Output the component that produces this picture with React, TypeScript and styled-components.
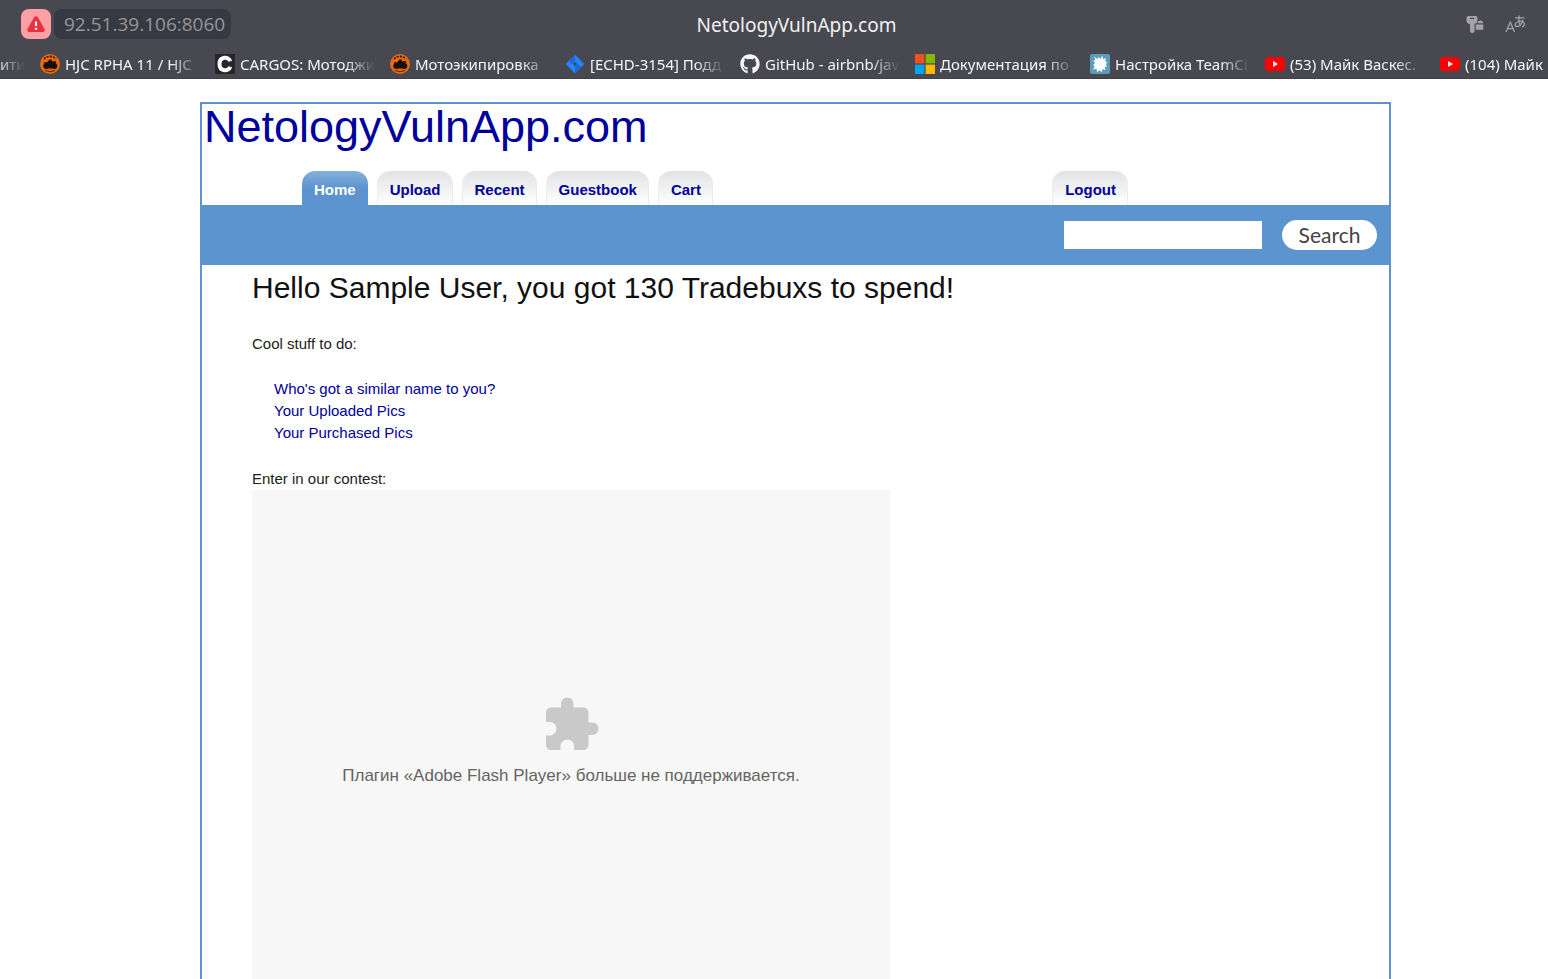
import React from "react";
import styled, { createGlobalStyle, css } from "styled-components";
import { FaGithub } from "react-icons/fa";

const GlobalStyle = createGlobalStyle`
  * { box-sizing: border-box; }
  body { margin: 0; background: #fff; }
  a { text-decoration: none; }
`;

const uiFont = `"Noto Sans", "Open Sans", sans-serif`;
const pageFont = `Arial, "Liberation Sans", sans-serif`;
const blue = "#5c94cf";
const navy = "#00009c";

const Window = styled.div`
  display: flex;
  flex-direction: column;
  height: 100vh;
  overflow: hidden;
`;

const Chrome = styled.header`
  flex: none;
  background: #484850;
  font-family: ${uiFont};
  border-bottom: 1px solid #3f3f46;
`;

const AddressBar = styled.div`
  display: grid;
  grid-template-columns: 1fr auto 1fr;
  align-items: center;
  height: 50px;
  padding: 0 22px 2px 21px;
`;

const AddressGroup = styled.div`
  display: flex;
  align-items: center;
  gap: 3px;
`;

const WarningButton = styled.button`
  display: flex;
  align-items: center;
  justify-content: center;
  width: 30px;
  height: 30px;
  padding: 0;
  border: 0;
  border-radius: 8px;
  background: #ffa0a4;
`;

const Address = styled.button`
  height: 30px;
  padding: 0 6px 0 10px;
  border: 0;
  border-radius: 8px;
  background: #373942;
  color: #96969c;
  font: 19px/30px "Open Sans", sans-serif;
`;

const WindowTitle = styled.div`
  padding: 2px 0 0 46px;
  color: #f1f1f2;
  font-size: 19px;
  line-height: 30px;
`;

const Tools = styled.div`
  display: flex;
  justify-content: flex-end;
  gap: 21px;
`;

const ToolButton = styled.button`
  display: flex;
  padding: 0;
  border: 0;
  background: none;
  color: #a3a3a7;
`;

const Bookmarks = styled.nav`
  display: flex;
  gap: 15px;
  height: 28px;
  overflow: hidden;
`;

const Bookmark = styled.a<{ $cut?: boolean }>`
  flex: none;
  display: flex;
  align-items: center;
  gap: 5px;
  width: ${(p) => (p.$cut ? 25 : 160)}px;
  height: 28px;
  color: #f6f6f7;
  font-size: 15px;
  line-height: 28px;

  svg { flex: none; }
`;

const BookmarkLabel = styled.span`
  flex: 1;
  overflow: hidden;
  white-space: nowrap;
  mask-image: linear-gradient(to left, transparent, #000 30px);
`;

const Viewport = styled.main`
  flex: 1;
  min-height: 0;
  overflow: auto;
  scrollbar-width: none;
  padding: 23px 157px 0 200px;
  font-family: ${pageFont};
  font-size: 15px;
  line-height: 22px;
  color: #222;
`;

const Frame = styled.div`
  border: 2px solid ${blue};
`;

const SiteTitle = styled.h1`
  margin: 0;
  padding-left: 2px;
  font-size: 45px;
  font-weight: 400;
  line-height: 46px;

  a { color: ${navy}; }
`;

const Tabs = styled.nav`
  display: flex;
  gap: 9px;
  margin-top: 21px;
  padding: 0 261px 0 100px;
`;

const Tab = styled.a<{ $active?: boolean; $end?: boolean }>`
  height: 34px;
  padding: 0 12px 0 13px;
  border-radius: 13px 13px 0 0;
  font-weight: 700;
  line-height: 38px;
  color: ${navy};
  background: linear-gradient(#e0e3e4, #fff);
  box-shadow: inset 1px 0 #ededed, inset -1px 0 #ededed;
  ${(p) => p.$end && css`margin-left: auto;`}
  ${(p) =>
    p.$active &&
    css`
      padding-left: 12px;
      color: #fff;
      background: linear-gradient(#86b0dc, ${blue} 50%);
      box-shadow: none;
    `}
`;

const SearchBar = styled.form`
  display: flex;
  align-items: center;
  justify-content: flex-end;
  gap: 20px;
  height: 60px;
  padding-right: 12px;
  background: ${blue};
`;

const SearchInput = styled.input`
  width: 198px;
  height: 28px;
  padding: 0 4px;
  border: 0;
  background: #fff;
  font: 15px ${pageFont};
`;

const SearchButton = styled.button`
  width: 95px;
  height: 30px;
  padding: 0;
  border: 0;
  border-radius: 15px;
  background: #fff;
  color: #444;
  font: 21px/28px Lato, "Open Sans", sans-serif;
`;

const Content = styled.section`
  padding: 0 50px;
`;

const Greeting = styled.h2`
  margin: 0;
  color: #111;
  font-size: 30px;
  font-weight: 400;
  line-height: 45px;
`;

const Paragraph = styled.p`
  margin: 23px 0 0;
`;

const LinkList = styled.ul`
  margin: 23px 0 24px;
  padding: 0 0 0 22px;
  list-style: none;

  a { color: ${navy}; }
`;

const PluginBox = styled.div`
  display: flex;
  flex-direction: column;
  align-items: center;
  justify-content: center;
  gap: 10px;
  max-width: 638px;
  height: 502px;
  background: #f7f7f7;
  color: #646464;
  font-size: 17px;
`;

const Warning = () => (
  <svg width="18" height="17" viewBox="0 0 18 17">
    <path d="M7.3 1.1a2 2 0 0 1 3.4 0l6.7 11.7c.8 1.5 0 3.2-1.8 3.2H2.4C.6 16-.2 14.300.6 12.800z" fill="#e9303d" />
    <path d="M9 5.500v4.500" stroke="#fff" strokeWidth="2.200" />
    <circle cx="9" cy="12.700" r="1.300" fill="#fff" />
  </svg>
);

const Keys = () => (
  <svg width="18" height="18" viewBox="0 0 18 18" fill="currentColor">
    <path fillRule="evenodd" d="M2.500 1h7A2 2 0 0 1 11.500 3v2.600A3.400 3.400 0 0 1 8.500 9v7.500L7 18H5.500L4 16.500V9.200A4 4 0 0 1 .500 5.500V3a2 2 0 0 1 2-2zM4 2.700v1.300h4V2.700z" />
    <path d="M11.500 8.200c.3-3.700 5.500-3.700 5.700 0zM9.700 9.500h7.600v5.300H9.700z" />
  </svg>
);

const Translate = () => (
  <svg width="21" height="18" viewBox="0 0 21 18" fill="none" stroke="currentColor" strokeWidth="1.300">
    <path d="M1 17 5.300 7.200 9.500 17M2.500 13.700h5.700" />
    <path d="M10 2.800h9.500M14 .500c-.6 4-.2 7 1.200 10.500M17.800 4.800c-1.200 4.500-3.800 7-6.300 6.700-2.700-.6-1-4.800 3.500-5.300 4.500-.3 6.200 4.300 1.800 5.600" />
  </svg>
);

const Moto = () => (
  <svg width="20" height="20" viewBox="0 0 20 20">
    <circle cx="10" cy="10" r="10" fill="#e96a0c" />
    <path d="M4 4.800Q10 0 16 4.800" fill="none" stroke="#231506" strokeWidth="1.600" strokeDasharray="2 1.200" />
    <circle cx="6.300" cy="12" r="3" fill="#170e08" />
    <circle cx="14.300" cy="12" r="3" fill="#170e08" />
    <path d="m3.500 8 3.500.4 2.500-2.800 2.500.2-.5 1.800 4-.5.800 1.800-2 1.200.5 3-3 1.500H7.500L6 11z" fill="#170e08" />
    <path d="M5 16.500q5 2.400 10 0" stroke="#4a2509" fill="none" />
  </svg>
);

const Cargos = () => (
  <svg width="20" height="20" viewBox="0 0 20 20">
    <path fill="#26262a" d="M0 0h20v20H0z" />
    <path d="M15.200 7.300C13.700 2 4.500 2.300 4.500 10s9.200 8 10.700 2.700" fill="none" stroke="#fff" strokeWidth="4" />
  </svg>
);

const Jira = () => (
  <svg width="20" height="20" viewBox="0 0 20 20">
    <path d="m10 .500 9.300 9.500L10 19.500.700 10z" fill="#2684ff" />
    <path d="M10 .500v6.400L6.900 10 4.200 7.200zM10 19.500v-6.400l3.100-3.100 2.700 2.800z" fill="#1b68d8" />
    <path d="m10 7.700 2.300 2.300-2.300 2.300L7.700 10z" fill="#484850" />
  </svg>
);

const Microsoft = () => (
  <svg width="20" height="20" viewBox="0 0 20 20">
    <path fill="#f25022" d="M0 0h9.400v9.400H0z" />
    <path fill="#7fba00" d="M10.600 0H20v9.400h-9.400z" />
    <path fill="#00a4ef" d="M0 10.600h9.400V20H0z" />
    <path fill="#ffb900" d="M10.600 10.600H20V20h-9.400z" />
  </svg>
);

const Splash = () => (
  <svg width="20" height="20" viewBox="0 0 20 20">
    <rect width="20" height="20" rx="2" fill="#5c9dbd" />
    <path d="m4 2.500 3.300 2.400L8.500 3l1.700 2L12.500 1.800l.5 3.400 3-1.200-.8 3.200 2 .8-1.500 2.200 1.500 2-2.500.8.800 3-3-1-1 3.200-2-2.200-2.500 2.300-.4-3.500-3.600.8 1.700-3.100-1.500-1.500L5 8.700 3 6.500l2.500-.3z" fill="#fff" />
  </svg>
);

const YouTube = () => (
  <svg width="20" height="20" viewBox="0 0 20 20">
    <rect y="3" width="20" height="14" rx="3.500" fill="#f00" />
    <path d="m8 7 5 3-5 3z" fill="#fff" />
  </svg>
);

const Puzzle = () => (
  <svg width="60" height="60" viewBox="0 0 24 24" fill="#c9c9c9">
    <path d="M20.500 11H19V7c0-1.100-.9-2-2-2h-4V3.500C13 2.120 11.880 1 10.500 1S8 2.120 8 3.500V5H4c-1.100 0-1.990.9-1.990 2v3.800H3.500c1.490 0 2.700 1.210 2.700 2.700s-1.210 2.700-2.700 2.700H2V20c0 1.100.9 2 2 2h3.800v-1.500c0-1.490 1.210-2.700 2.700-2.700s2.700 1.210 2.700 2.700V22H17c1.100 0 2-.9 2-2v-4h1.500c1.380 0 2.500-1.120 2.500-2.500S21.880 11 20.500 11z" />
  </svg>
);

const bookmarks: { icon: React.ReactNode; label: string }[] = [
  { icon: <Moto />, label: "HJC RPHA 11 / HJC" },
  { icon: <Cargos />, label: "CARGOS: Мотоджи" },
  { icon: <Moto />, label: "Мотоэкипировка" },
  { icon: <Jira />, label: "[ECHD-3154] Подд" },
  { icon: <FaGithub size={20} />, label: "GitHub - airbnb/jav" },
  { icon: <Microsoft />, label: "Документация по" },
  { icon: <Splash />, label: "Настройка TeamCi" },
  { icon: <YouTube />, label: "(53) Майк Васкес." },
  { icon: <YouTube />, label: "(104) Майк" },
];

const tabs = ["Home", "Upload", "Recent", "Guestbook", "Cart"];

export default function App() {
  return (
    <Window>
      <GlobalStyle />
      <Chrome>
        <AddressBar>
          <AddressGroup>
            <WarningButton aria-label="Not secure">
              <Warning />
            </WarningButton>
            <Address>92.51.39.106:8060</Address>
          </AddressGroup>
          <WindowTitle>NetologyVulnApp.com</WindowTitle>
          <Tools>
            <ToolButton aria-label="Passwords">
              <Keys />
            </ToolButton>
            <ToolButton aria-label="Translate">
              <Translate />
            </ToolButton>
          </Tools>
        </AddressBar>
        <Bookmarks>
          <Bookmark href="#" $cut>
            <BookmarkLabel>ити</BookmarkLabel>
          </Bookmark>
          {bookmarks.map((b) => (
            <Bookmark href="#" key={b.label}>
              {b.icon}
              <BookmarkLabel>{b.label}</BookmarkLabel>
            </Bookmark>
          ))}
        </Bookmarks>
      </Chrome>
      <Viewport>
        <Frame>
          <SiteTitle>
            <a href="#">NetologyVulnApp.com</a>
          </SiteTitle>
          <Tabs>
            {tabs.map((t) => (
              <Tab href="#" key={t} $active={t === "Home"}>
                {t}
              </Tab>
            ))}
            <Tab href="#" $end>
              Logout
            </Tab>
          </Tabs>
          <SearchBar onSubmit={(e) => e.preventDefault()}>
            <SearchInput type="text" aria-label="Search pictures" />
            <SearchButton type="submit">Search</SearchButton>
          </SearchBar>
          <Content>
            <Greeting>Hello Sample User, you got 130 Tradebuxs to spend!</Greeting>
            <Paragraph>Cool stuff to do:</Paragraph>
            <LinkList>
              <li><a href="#">Who's got a similar name to you?</a></li>
              <li><a href="#">Your Uploaded Pics</a></li>
              <li><a href="#">Your Purchased Pics</a></li>
            </LinkList>
            <Paragraph>Enter in our contest:</Paragraph>
            <PluginBox>
              <Puzzle />
              <span>Плагин «Adobe Flash Player» больше не поддерживается.</span>
            </PluginBox>
          </Content>
        </Frame>
      </Viewport>
    </Window>
  );
}
